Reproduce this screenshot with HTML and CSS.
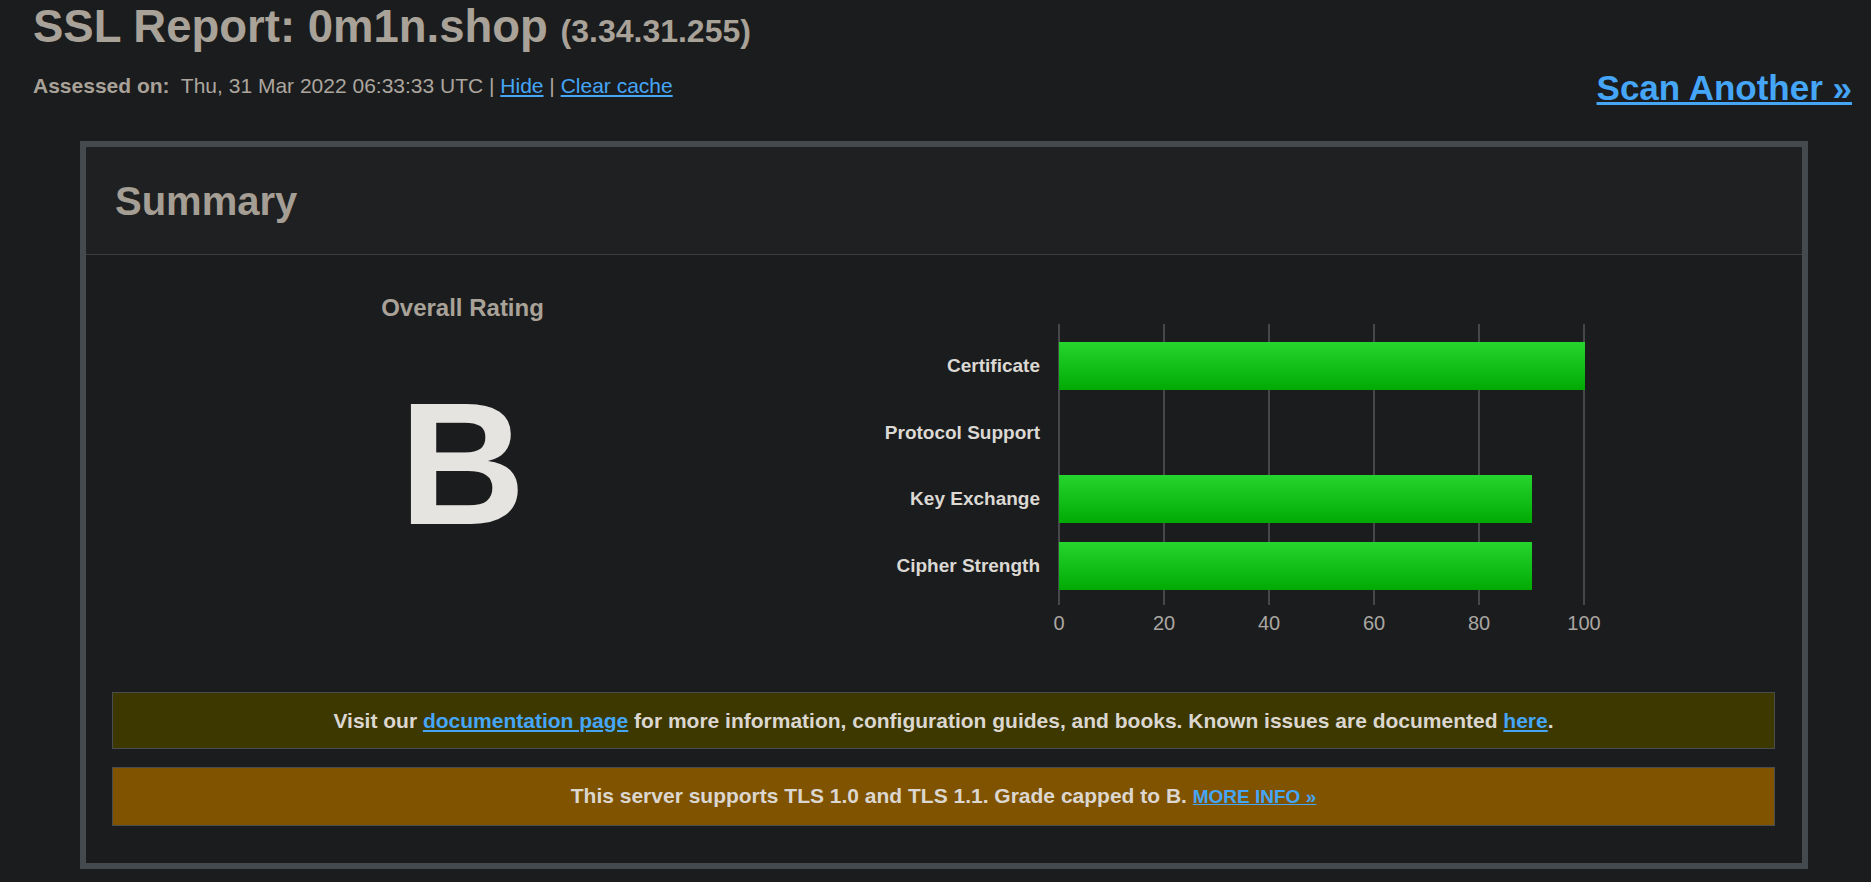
FILE: index.html
```html
<!DOCTYPE html>
<html lang="en">
<head>
<meta charset="utf-8">
<title>SSL Report: 0m1n.shop</title>
<link rel="stylesheet" href="styles.css">
</head>
<body>
<header class="top">
  <div class="top-left">
    <h1 class="title">SSL Report: 0m1n.shop <span class="ip">(3.34.31.255)</span></h1>
    <div class="assessed"><b>Assessed on:</b>&nbsp; Thu, 31 Mar 2022 06:33:33 UTC | <a href="#">Hide</a> | <a href="#">Clear cache</a></div>
  </div>
  <a class="scan" href="#">Scan Another &raquo;</a>
</header>

<section class="panel">
  <div class="panel-head"><h2>Summary</h2></div>
  <div class="panel-body">
    <div class="summary-row">
      <div class="rating">
        <div class="rating-title">Overall Rating</div>
        <div class="grade">B</div>
      </div>
      <div class="chart">
        <div class="gridlines"><i></i><i></i><i></i><i></i><i></i><i></i></div>
        <div class="rows">
          <div class="row"><span class="label">Certificate</span><div class="track"><div class="bar" style="width:100%"></div></div></div>
          <div class="row"><span class="label">Protocol Support</span><div class="track"></div></div>
          <div class="row"><span class="label">Key Exchange</span><div class="track"><div class="bar" style="width:90%"></div></div></div>
          <div class="row"><span class="label">Cipher Strength</span><div class="track"><div class="bar" style="width:90%"></div></div></div>
        </div>
        <div class="axis">
          <span class="tick"><span>0</span></span>
          <span class="tick"><span>20</span></span>
          <span class="tick"><span>40</span></span>
          <span class="tick"><span>60</span></span>
          <span class="tick"><span>80</span></span>
          <span class="tick"><span>100</span></span>
        </div>
      </div>
    </div>

    <div class="notice notice-info">Visit our <a href="#">documentation page</a> for more information, configuration guides, and books. Known issues are documented <a href="#">here</a>.</div>
    <div class="notice notice-warn">This server supports TLS 1.0 and TLS 1.1. Grade capped to B. <a href="#" class="more">MORE INFO &raquo;</a></div>
  </div>
</section>
</body>
</html>
```

FILE: styles.css
```css
* { box-sizing: border-box; }

html, body {
  margin: 0;
  background: #1b1c1e;
  height: 100%;
  overflow: hidden;
}

body {
  font-family: "Liberation Sans", Arial, Helvetica, sans-serif;
  color: #aba49b;
  padding: 0 19px 0 33px;
}

a { color: #45a6f7; text-decoration: underline; }

.top {
  display: flex;
  justify-content: space-between;
  align-items: flex-start;
  height: 108px;
}

.title {
  margin: 0;
  font-size: 45.5px;
  font-weight: bold;
  line-height: 53px;
  color: #a9a298;
}

.ip {
  font-size: 32px;
}

.assessed {
  margin-top: 16px;
  font-size: 21px;
  line-height: 24px;
  color: #aca69e;
}

.assessed b { color: #a9a298; }

.scan {
  margin-top: 68px;
  font-size: 35px;
  line-height: 40px;
  font-weight: bold;
}

.panel {
  margin: 33px 44px 0 47px;
  border: 6px solid #444a4e;
  background: #1b1c1e;
}

.panel-head {
  background: #1f2022;
  border-bottom: 1px solid #3c3f42;
  padding: 31px 0 30px 29px;
}

.panel-head h2 {
  margin: 0;
  font-size: 40px;
  line-height: 46px;
  color: #a59e94;
}

.panel-body {
  padding: 0 27px 37px 26px;
}

.summary-row {
  display: flex;
  align-items: flex-start;
}

.rating {
  width: 701px;
  text-align: center;
  padding-top: 39px;
}

.rating-title {
  font-size: 24px;
  line-height: 28px;
  font-weight: bold;
  color: #a9a298;
}

.grade {
  margin-top: 54px;
  font-size: 175px;
  line-height: 175px;
  font-weight: bold;
  color: #e6e4e1;
}

.chart {
  position: relative;
  margin-top: 69px;
}

.gridlines {
  position: absolute;
  left: 245px;
  top: 0;
  width: 527px;
  height: 281px;
  display: flex;
  justify-content: space-between;
}

.gridlines i {
  display: block;
  width: 2px;
  height: 100%;
  background: #45474a;
}

.rows {
  position: relative;
  padding: 9px 0 6px;
}

.row {
  display: flex;
  align-items: center;
  height: 66.5px;
}

.label {
  width: 227px;
  margin-right: 19px;
  text-align: right;
  font-size: 19px;
  font-weight: bold;
  color: #dcd9d4;
}

.track {
  width: 526px;
  height: 48px;
}

.bar {
  height: 100%;
  background: linear-gradient(to bottom, #25d42c 0%, #13c01a 50%, #01aa03 100%);
}

.axis {
  display: flex;
  justify-content: space-between;
  width: 527px;
  margin-left: 245px;
  margin-top: 7px;
  font-size: 20px;
  line-height: 23px;
  color: #aaa7a2;
}

.tick {
  width: 2px;
  display: flex;
  justify-content: center;
}

.tick span { white-space: nowrap; }

.notice {
  border: 1px solid #4b4c4e;
  text-align: center;
  font-size: 21px;
  line-height: 24px;
  font-weight: bold;
  color: #dbd7d0;
  padding: 15.5px 10px;
}

.notice-info {
  margin-top: 57px;
  background: #3d3700;
}

.notice-warn {
  margin-top: 18px;
  background: #805300;
  padding: 16px 10px;
}

.more {
  font-size: 19px;
}
```
